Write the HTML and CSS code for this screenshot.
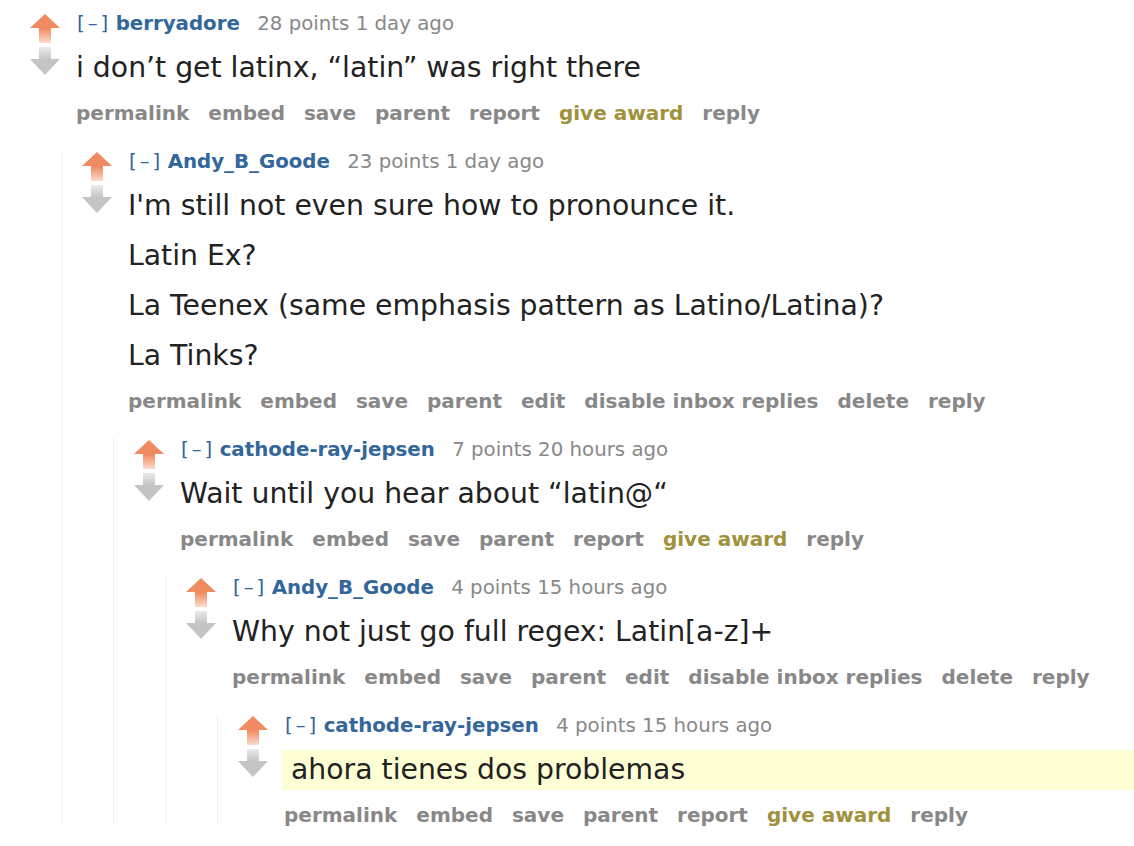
FILE: index.html
```html
<!DOCTYPE html>
<html>
<head>
<meta charset="utf-8">
<link rel="stylesheet" href="styles.css">
</head>
<body>
<div class="page">
  <div class="comment">
    <div class="row">
      <div class="midcol">
        <svg class="arrow" width="30" height="29" viewBox="0 0 30 29"><defs><linearGradient id="up1" x1="0" y1="0" x2="0" y2="1"><stop offset="0.5" stop-color="#f08a60"/><stop offset="1" stop-color="#f08a60" stop-opacity="0.3"/></linearGradient></defs><path d="M15 0 L30 14 L21 14 L21 29 L9 29 L9 14 L0 14 Z" fill="url(#up1)"/></svg>
        <svg class="arrow" width="30" height="28" viewBox="0 0 30 28"><defs><linearGradient id="dn1" x1="0" y1="0" x2="0" y2="1"><stop offset="0" stop-color="#c4c4c4" stop-opacity="0.35"/><stop offset="0.45" stop-color="#c4c4c4"/></linearGradient></defs><path d="M9 0 L21 0 L21 12 L30 12 L15 28 L0 12 L9 12 Z" fill="url(#dn1)"/></svg>
      </div>
      <div class="entry">
        <p class="tagline"><span class="expand">[–]</span> <span class="author">berryadore</span> <span class="score">28 points 1 day ago</span></p>
        <div class="md"><p>i don’t get latinx, “latin” was right there</p></div>
        <ul class="buttons"><li>permalink</li><li>embed</li><li>save</li><li>parent</li><li>report</li><li class="award">give award</li><li>reply</li></ul>
      </div>
    </div>
    <div class="child">
      <div class="comment">
        <div class="row">
          <div class="midcol">
            <svg class="arrow" width="30" height="29" viewBox="0 0 30 29"><path d="M15 0 L30 14 L21 14 L21 29 L9 29 L9 14 L0 14 Z" fill="url(#up1)"/></svg>
            <svg class="arrow" width="30" height="28" viewBox="0 0 30 28"><path d="M9 0 L21 0 L21 12 L30 12 L15 28 L0 12 L9 12 Z" fill="url(#dn1)"/></svg>
          </div>
          <div class="entry">
            <p class="tagline"><span class="expand">[–]</span> <span class="author">Andy_B_Goode</span> <span class="score">23 points 1 day ago</span></p>
            <div class="md"><p>I'm still not even sure how to pronounce it.</p><p>Latin Ex?</p><p>La Teenex (same emphasis pattern as Latino/Latina)?</p><p>La Tinks?</p></div>
            <ul class="buttons"><li>permalink</li><li>embed</li><li>save</li><li>parent</li><li>edit</li><li>disable inbox replies</li><li>delete</li><li>reply</li></ul>
          </div>
        </div>
        <div class="child">
          <div class="comment">
            <div class="row">
              <div class="midcol">
                <svg class="arrow" width="30" height="29" viewBox="0 0 30 29"><path d="M15 0 L30 14 L21 14 L21 29 L9 29 L9 14 L0 14 Z" fill="url(#up1)"/></svg>
                <svg class="arrow" width="30" height="28" viewBox="0 0 30 28"><path d="M9 0 L21 0 L21 12 L30 12 L15 28 L0 12 L9 12 Z" fill="url(#dn1)"/></svg>
              </div>
              <div class="entry">
                <p class="tagline"><span class="expand">[–]</span> <span class="author">cathode-ray-jepsen</span> <span class="score">7 points 20 hours ago</span></p>
                <div class="md"><p>Wait until you hear about “latin@“</p></div>
                <ul class="buttons"><li>permalink</li><li>embed</li><li>save</li><li>parent</li><li>report</li><li class="award">give award</li><li>reply</li></ul>
              </div>
            </div>
            <div class="child">
              <div class="comment">
                <div class="row">
                  <div class="midcol">
                    <svg class="arrow" width="30" height="29" viewBox="0 0 30 29"><path d="M15 0 L30 14 L21 14 L21 29 L9 29 L9 14 L0 14 Z" fill="url(#up1)"/></svg>
                    <svg class="arrow" width="30" height="28" viewBox="0 0 30 28"><path d="M9 0 L21 0 L21 12 L30 12 L15 28 L0 12 L9 12 Z" fill="url(#dn1)"/></svg>
                  </div>
                  <div class="entry">
                    <p class="tagline"><span class="expand">[–]</span> <span class="author">Andy_B_Goode</span> <span class="score">4 points 15 hours ago</span></p>
                    <div class="md"><p>Why not just go full regex: Latin[a-z]+</p></div>
                    <ul class="buttons"><li>permalink</li><li>embed</li><li>save</li><li>parent</li><li>edit</li><li>disable inbox replies</li><li>delete</li><li>reply</li></ul>
                  </div>
                </div>
                <div class="child">
                  <div class="comment">
                    <div class="row">
                      <div class="midcol">
                        <svg class="arrow" width="30" height="29" viewBox="0 0 30 29"><path d="M15 0 L30 14 L21 14 L21 29 L9 29 L9 14 L0 14 Z" fill="url(#up1)"/></svg>
                        <svg class="arrow" width="30" height="28" viewBox="0 0 30 28"><path d="M9 0 L21 0 L21 12 L30 12 L15 28 L0 12 L9 12 Z" fill="url(#dn1)"/></svg>
                      </div>
                      <div class="entry">
                        <p class="tagline"><span class="expand">[–]</span> <span class="author">cathode-ray-jepsen</span> <span class="score">4 points 15 hours ago</span></p>
                        <div class="md highlighted"><p>ahora tienes dos problemas</p></div>
                        <ul class="buttons"><li>permalink</li><li>embed</li><li>save</li><li>parent</li><li>report</li><li class="award">give award</li><li>reply</li></ul>
                      </div>
                    </div>
                  </div>
                </div>
              </div>
            </div>
          </div>
        </div>
      </div>
    </div>
  </div>
</div>
</body>
</html>
```

FILE: styles.css
```css
html, body {
  margin: 0;
  padding: 0;
  background: #ffffff;
}
body {
  font-family: "DejaVu Sans", Verdana, sans-serif;
  color: #222222;
  overflow: hidden;
}
.page {
  padding: 13px 0 0 20px;
}
.row {
  display: flex;
  align-items: flex-start;
}
.midcol {
  display: flex;
  flex-direction: column;
  gap: 4px;
  margin-left: 10px;
  width: 30px;
  padding-top: 1px;
  flex: none;
}
.arrow {
  display: block;
}
.entry {
  flex: 1;
  margin-left: 16px;
  min-width: 0;
}
.tagline {
  margin: 0;
  font-size: 19.8px;
  line-height: 22px;
  color: #888888;
  white-space: nowrap;
}
.expand {
  color: #336699;
  letter-spacing: 3px;
  margin-right: -2px;
  margin-left: 1px;
}
.author {
  color: #336699;
  font-weight: bold;
  margin-right: 11px;
}
.md {
  margin-top: 13px;
  font-size: 28.3px;
  line-height: 40px;
  color: #222222;
}
.md p {
  margin: 0 0 10px 0;
  white-space: nowrap;
}
.md p:last-child {
  margin-bottom: 0;
}
.md.highlighted {
  background: #ffffd6;
  margin-left: -2px;
  padding-left: 9px;
}
.buttons {
  list-style: none;
  margin: 14px 0 0 0;
  padding: 0;
  display: flex;
  gap: 19px;
  font-size: 20px;
  line-height: 22px;
  font-weight: bold;
  color: #888888;
  white-space: nowrap;
}
.buttons .award {
  color: #a0913c;
}
.child {
  margin-left: 41px;
  margin-top: 27px;
  padding-left: 10px;
  border-left: 1px dotted #ddddff;
}
```
